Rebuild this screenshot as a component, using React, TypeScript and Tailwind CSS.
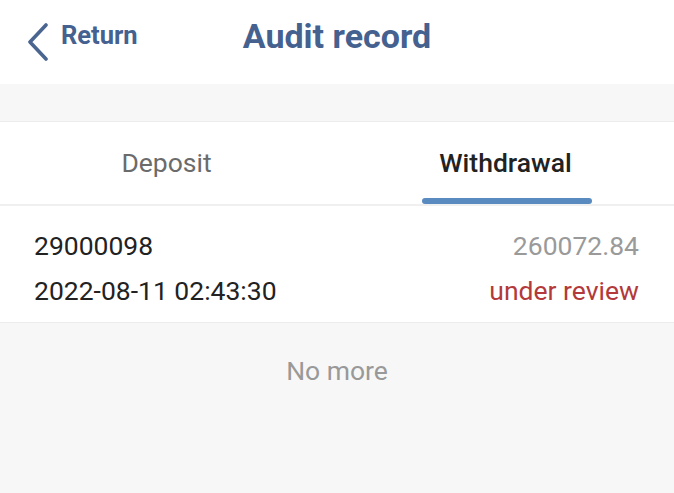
import React from "react";

export default function App() {
  const font = { fontFamily: "Roboto, 'Noto Sans', sans-serif" };
  return (
    <div className="w-[674px] h-[493px] bg-[#f7f7f7] flex flex-col overflow-hidden" style={font}>
      <div className="h-[84px] bg-white relative flex items-center justify-center shrink-0 pb-[12px]">
        <div className="absolute left-[26px] top-0 h-full pb-[12px] flex items-center gap-[11px]">
          <svg width="24" height="38" viewBox="0 0 24 38" className="mt-[12px]">
            <path d="M20 2 L4 19 L20 36" fill="none" stroke="#4a6590" strokeWidth="3.6" strokeLinecap="round" strokeLinejoin="round" />
          </svg>
          <span className="text-[25.5px] font-bold text-[#44618f] leading-none">Return</span>
        </div>
        <span className="text-[34px] font-bold text-[#44618f] leading-none">Audit record</span>
      </div>
      <div className="h-[38px] shrink-0 border-b border-[#ececec]" />
      <div className="h-[84px] bg-white flex shrink-0 border-b-2 border-[#f0f0f0]">
        <div className="flex-1 flex items-center justify-center">
          <span className="text-[26.5px] text-[#6b6b6b] leading-none -ml-[4px]">Deposit</span>
        </div>
        <div className="flex-1 relative flex items-center justify-center">
          <span className="text-[26.5px] text-[#222] font-medium leading-none">Withdrawal</span>
          <div className="absolute bottom-0 left-[85px] w-[170px] h-[6px] rounded-full bg-[#5a8bc0]" />
        </div>
      </div>
      <div className="bg-white h-[117px] shrink-0 border-b border-[#ececec] flex flex-col justify-center gap-[19px] pl-[34px] pr-[35px] pt-[9px]">
        <div className="flex justify-between items-center leading-none text-[26.5px]">
          <span className="text-[#222]">29000098</span>
          <span className="text-[#9a9a9a]">260072.84</span>
        </div>
        <div className="flex justify-between items-center leading-none text-[26.5px]">
          <span className="text-[#222]">2022-08-11 02:43:30</span>
          <span className="text-[#b3393b]">under review</span>
        </div>
      </div>
      <div className="flex justify-center pt-[35px]">
        <span className="text-[26.5px] text-[#999] leading-none">No more</span>
      </div>
    </div>
  );
}
